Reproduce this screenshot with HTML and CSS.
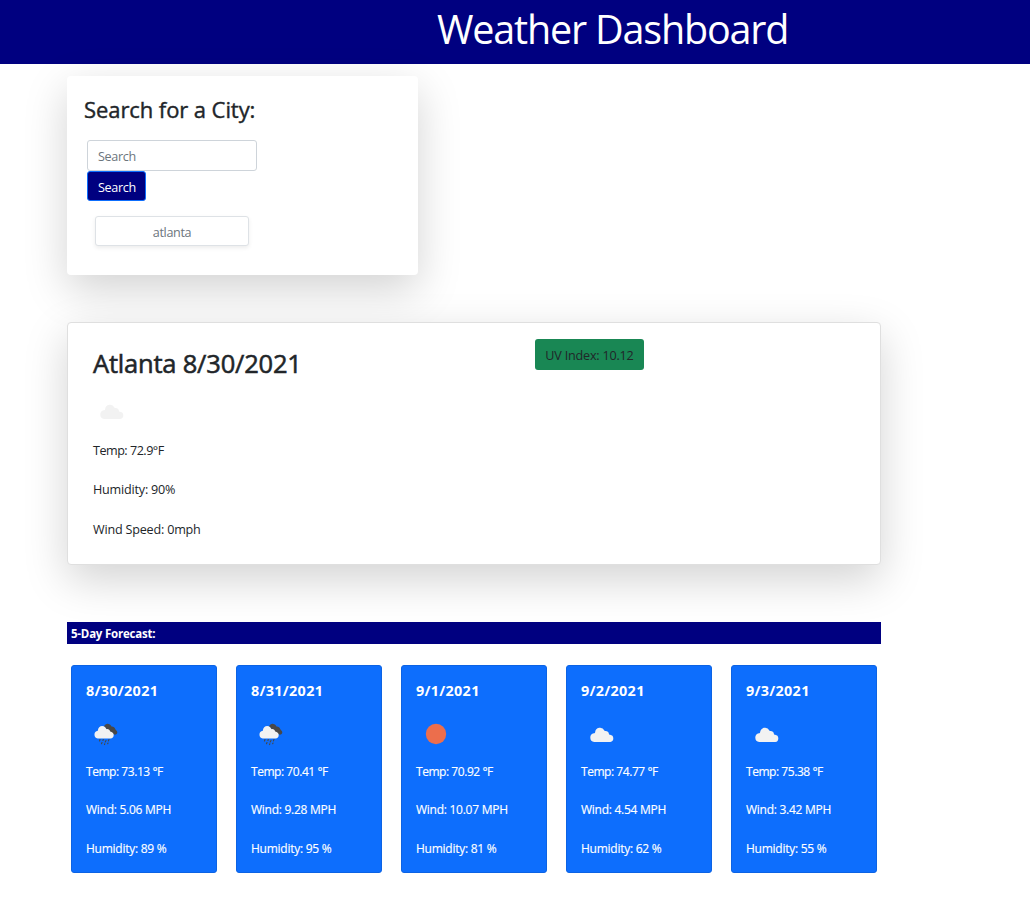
FILE: index.html
```html
<!DOCTYPE html>
<html lang="en">
<head>
<meta charset="utf-8">
<title>Weather Dashboard</title>
<link rel="stylesheet" href="styles.css">
</head>
<body>
<svg width="0" height="0" class="defs">
  <symbol id="cloud" viewBox="0 0 45 45"><path fill="#f2f2f2" d="M15.200 30a4.400 4.400 0 0 1-.3-8.700c.8-.1 1.100-.3 1.200-1.100a4.900 4.900 0 0 1 9.300-1.600c.2.500.5.500 1 .5 1.900-.1 3.200 1 3.500 2.600.1.700.5.900 1.200 1a3.700 3.700 0 0 1 .2 7.300z"/></symbol>
  <symbol id="rain" viewBox="0 0 45 45">
    <path fill="#484848" d="M20 14.500c.8-2 2.600-2.900 4.300-2.600 1.500.2 2.600 1.100 3.200 2.500 2-.1 3.300.9 3.700 2.500.4 1.200 2.100 1.500 2.100 3.300 0 1.600-1.200 2.600-3 2.400l-4-2z"/>
    <path fill="#f2f2f2" d="M13.700 26.500a3.900 3.900 0 0 1 .1-7.700c.2-3 2.100-4.800 4.400-4.800 2.200 0 3.600 1.300 4.200 3.200 2-.4 3.400.7 3.800 2.400 2 .3 3.500 1.600 3.500 3.500 0 2-1.300 3.400-3.200 3.400z"/>
    <path stroke="#484848" stroke-width="1.100" stroke-linecap="round" d="M16 27.500l-.5 1.500M19.300 27.500l-.4 1M18 30.500l-.5 1.300M22 28.500l-.8 1.500M20.800 31.800l-.3.800M25 27.500l-.6 1.400M24 31l-.3.800"/>
  </symbol>
  <symbol id="sun" viewBox="0 0 45 45"><circle cx="22" cy="22" r="10.200" fill="#ec6e4c"/></symbol>
</svg>
<header class="banner"><h1>Weather Dashboard</h1></header>
<main class="page">
  <section class="search-card">
    <h3>Search for a City:</h3>
    <form class="search-form">
      <input class="field" type="text" placeholder="Search">
      <button class="submit" type="button">Search</button>
      <button class="history" type="button">atlanta</button>
    </form>
  </section>
  <section class="current">
    <div class="details">
      <h2>Atlanta 8/30/2021</h2>
      <svg class="icon"><use href="#cloud"/></svg>
      <p class="temp">Temp: 72.9°F</p>
      <p>Humidity: 90%</p>
      <p>Wind Speed: 0mph</p>
    </div>
    <div class="uv">UV Index: 10.12</div>
  </section>
  <h5 class="forecast-title">5-Day Forecast:</h5>
  <section class="forecast">
    <article class="day"><h4>8/30/2021</h4><svg class="icon"><use href="#rain"/></svg><p class="temp">Temp: 73.13 °F</p><p>Wind: 5.06 MPH</p><p>Humidity: 89 %</p></article>
    <article class="day"><h4>8/31/2021</h4><svg class="icon"><use href="#rain"/></svg><p class="temp">Temp: 70.41 °F</p><p>Wind: 9.28 MPH</p><p>Humidity: 95 %</p></article>
    <article class="day"><h4>9/1/2021</h4><svg class="icon"><use href="#sun"/></svg><p class="temp">Temp: 70.92 °F</p><p>Wind: 10.07 MPH</p><p>Humidity: 81 %</p></article>
    <article class="day"><h4>9/2/2021</h4><svg class="icon"><use href="#cloud"/></svg><p class="temp">Temp: 74.77 °F</p><p>Wind: 4.54 MPH</p><p>Humidity: 62 %</p></article>
    <article class="day"><h4>9/3/2021</h4><svg class="icon"><use href="#cloud"/></svg><p class="temp">Temp: 75.38 °F</p><p>Wind: 3.42 MPH</p><p>Humidity: 55 %</p></article>
  </section>
</main>
</body>
</html>
```
FILE: styles.css
```css
* { box-sizing: border-box; }
body { margin: 0; background: #fff; color: #212529; font-family: "Open Sans", "Noto Sans", sans-serif; font-size: 12.6px; overflow: hidden; }
h1, h2, h3, h4, h5, p { margin: 0; white-space: nowrap; }
.defs { display: block; height: 0; }
.banner { height: 64px; background: #000080; color: #fff; padding-left: 437px; }
.banner h1 { font-size: 39.500px; font-weight: 400; line-height: 58px; letter-spacing: -1.180px; }
.page { width: 814px; margin: 12px 0 0 67px; }
.search-card { width: 351px; height: 199px; padding: 17px; background: #fff; border-radius: 4px; box-shadow: 0 14.4px 43.2px rgba(0,0,0,.175); }
.search-card h3 { font-size: 22px; font-weight: 500; line-height: 33px; letter-spacing: -.080px; -webkit-text-stroke: .4px; }
.search-form { display: flex; flex-direction: column; align-items: flex-start; margin: 14px 0 0 3px; }
.field, .submit, .history { font: inherit; border-radius: 3px; padding: 0 10px; letter-spacing: -0.350px; }
.field { width: 170px; height: 31px; border: 1px solid #ced4da; color: #212529; padding-top: 2px; }
.field::placeholder { color: #6c757d; opacity: 1; }
.submit { width: 59px; height: 30px; border: 1px solid #0d6efd; background: #000080; color: #fff; padding-top: 2px; }
.history { width: 154px; height: 30px; margin: 15px 0 0 8px; border: 1px solid #dee2e6; background: #fff; color: #6c757d; box-shadow: 0 2px 4px rgba(0,0,0,.075); padding-top: 2px; }
.current { display: flex; height: 243px; margin-top: 47px; padding: 16px 25px; background: #fff; border: 1px solid #dfdfdf; border-radius: 4px; box-shadow: 0 14.4px 43.2px rgba(0,0,0,.175); }
.details { width: 442px; }
.details h2 { font-size: 25.500px; font-weight: 500; line-height: 48px; margin-bottom: 2px; letter-spacing: -0.200px; -webkit-text-stroke: .55px; }
.icon { display: block; width: 45px; height: 45px; }
.details .icon { margin-left: -4px; }
.details p { line-height: 19px; margin-bottom: 20.500px; letter-spacing: -0.2px; }
.details .temp { margin-top: 7px; margin-bottom: 20px; letter-spacing: -0.500px; }
.uv { width: 109px; height: 31px; line-height: 33px; text-align: center; background: #198754; border-radius: 3px; letter-spacing: -0.200px; }
.forecast-title { height: 22px; margin-top: 57px; padding-left: 4px; background: #000080; color: #fff; font-size: 11.500px; font-weight: 700; line-height: 23px; letter-spacing: -.22px; }
.forecast { display: flex; gap: 19px; margin: 21px 4px 0; }
.day { width: 146px; height: 208px; padding: 15px 14px; background: #0d6efd; border: 1px solid #0c63e4; border-radius: 3px; color: #fff; }
.day h4 { font-size: 14.400px; font-weight: 700; line-height: 20px; letter-spacing: .3px; }
.day .icon { width: 45px; height: 45px; margin: 11px 0 6px -2px; }
.day p { font-size: 12px; font-weight: 500; line-height: 18px; margin-bottom: 20.500px; letter-spacing: -0.260px; -webkit-text-stroke: .15px; }
.day .temp { margin-bottom: 20px; letter-spacing: -0.450px; }
```
